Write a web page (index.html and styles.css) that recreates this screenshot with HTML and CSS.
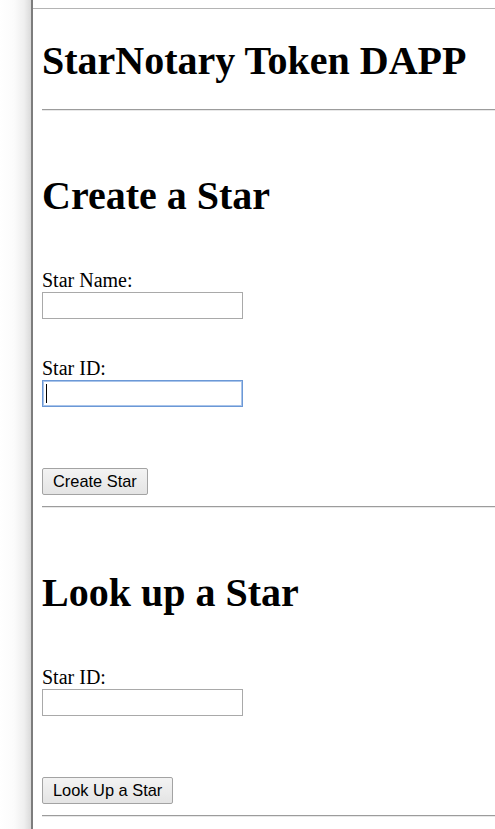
FILE: index.html
```html
<!DOCTYPE html>
<html>
<head>
<meta charset="utf-8">
<title>StarNotary Token DAPP</title>
<link rel="stylesheet" href="styles.css">
</head>
<body>
<div class="frame">
  <div class="gutter"></div>
  <main class="page">
    <h1 class="title">StarNotary Token DAPP</h1>
    <hr class="rule rule-top">
    <section class="section">
      <h1 class="section-title">Create a Star</h1>
      <label class="field-label" for="starName">Star Name:</label>
      <input class="field" id="starName" type="text">
      <label class="field-label field-label-gap" for="starId">Star ID:</label>
      <span class="field-wrap">
        <input class="field field-focused" id="starId" type="text">
        <span class="caret"></span>
      </span>
      <div class="actions"><button class="btn" type="button">Create Star</button></div>
    </section>
    <hr class="rule">
    <section class="section">
      <h1 class="section-title">Look up a Star</h1>
      <label class="field-label" for="lookId">Star ID:</label>
      <input class="field" id="lookId" type="text">
      <div class="actions"><button class="btn" type="button">Look Up a Star</button></div>
    </section>
    <hr class="rule">
  </main>
</div>
</body>
</html>
```
FILE: styles.css
```css
html, body {
  margin: 0;
  padding: 0;
  background: #ffffff;
}

body {
  font-family: "Liberation Serif", "Times New Roman", serif;
  font-size: 20px;
  color: #000;
}

.frame {
  display: flex;
  min-height: 829px;
}

.gutter {
  width: 31px;
  flex: none;
  background: linear-gradient(to right, #ffffff 0%, #fbfbfb 45%, #efefef 78%, #dadada 100%);
  border-right: 2px solid #7d7d7d;
}

.page {
  flex: 1;
  margin-top: 8px;
  border-top: 1px solid #b4b4b4;
  padding-left: 9px;
  display: flex;
  flex-direction: column;
  align-items: flex-start;
}

.title,
.section-title {
  font-size: 40px;
  font-weight: bold;
  line-height: 46px;
  margin: 0;
  white-space: nowrap;
}

.title {
  margin-top: 29px;
  margin-bottom: 25px;
}

.rule {
  align-self: stretch;
  margin: 0;
  height: 0;
  border: none;
  border-top: 1px solid #9c9c9c;
  border-bottom: 1px solid #e8e8e8;
}

.section {
  display: flex;
  flex-direction: column;
  align-items: flex-start;
}

.section-title {
  margin-top: 62px;
  margin-bottom: 50px;
}

.field-label {
  display: block;
  line-height: 23px;
  font-size: 20px;
}

.field-label-gap {
  margin-top: 38px;
}

.field {
  display: block;
  box-sizing: border-box;
  width: 201px;
  height: 27px;
  margin: 0;
  padding: 0 3px;
  border: 1px solid #a9a9a9;
  background: #fff;
  font-family: "Liberation Sans", Arial, sans-serif;
  font-size: 16px;
  outline: none;
}

.field-wrap {
  position: relative;
  display: block;
}

.field-focused {
  border: 1px solid #6b98d6;
  box-shadow: inset 0 0 0 1px #a9c4ea;
}

.caret {
  position: absolute;
  left: 4px;
  top: 4px;
  width: 1px;
  height: 19px;
  background: #000;
}

.actions {
  margin-top: 61px;
  margin-bottom: 11px;
}

.btn {
  box-sizing: border-box;
  height: 27px;
  margin: 0;
  padding: 0 10px;
  font-family: "Liberation Sans", Arial, sans-serif;
  font-size: 16.4px;
  color: #000;
  background: linear-gradient(#f3f3f3, #e4e4e4);
  border: 1px solid #a3a3a3;
  border-radius: 2px;
}
```
